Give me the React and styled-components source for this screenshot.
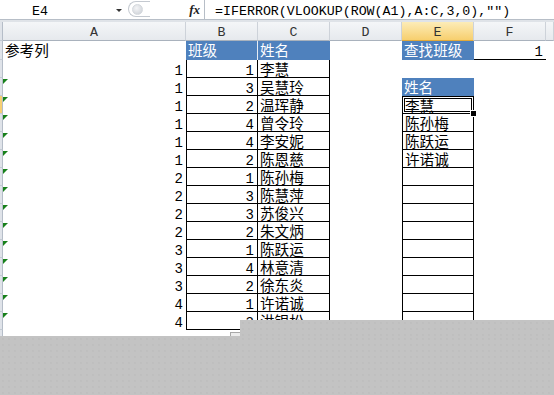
import React from 'react';
import styled, { createGlobalStyle, css } from 'styled-components';

const Global = createGlobalStyle`
  html, body { margin: 0; padding: 0; background: #fff; overflow: hidden; }
  body { width: 554px; height: 395px; font-family: "Liberation Mono", monospace; }
`;

const COLS = '3px 183px 72px 72px 72px 72px 72px 1fr';
const MONO = '"Liberation Mono", "DejaVu Sans Mono", monospace';
const CJK = '"Noto Sans CJK SC", "Noto Sans", sans-serif';

const Page = styled.div`
  position: relative;
  width: 554px;
  height: 395px;
  overflow: hidden;
  background: #fff;
`;

const FormulaBar = styled.div`
  display: flex;
  height: 19px;
  border-bottom: 1px solid #b7bec7;
  background: #fff;
`;

const NameBox = styled.div`
  width: 128px;
  box-sizing: border-box;
  display: flex;
  align-items: center;
  padding: 4px 0 0 32px;
  font: 13.3px ${MONO};
  color: #000;
`;

const DropArrow = styled.span`
  margin-left: auto;
  margin-right: 6px;
  margin-top: -3px;
  width: 0;
  height: 0;
  border-left: 3px solid transparent;
  border-right: 3px solid transparent;
  border-top: 3px solid #333;
`;

const Splitter = styled.div`
  width: 22px;
  height: 16px;
  margin-top: 1px;
  box-sizing: border-box;
  border: 1px solid #c4c9d0;
  border-right: none;
  border-radius: 9px 0 0 9px;
  display: flex;
  align-items: center;
  padding-left: 3px;
`;

const Knob = styled.span`
  width: 9px;
  height: 9px;
  border-radius: 50%;
  background: radial-gradient(circle at 40% 35%, #f4f5f7, #c9cdd3);
  border: 1px solid #d4d8dd;
`;

const FxBox = styled.div`
  width: 54px;
  display: flex;
  align-items: center;
  justify-content: flex-end;
  padding: 1px 4px 0 0;
  box-sizing: border-box;
  font: italic bold 13px "Liberation Serif", serif;
  color: #222;
`;

const FormulaInput = styled.div`
  flex: 1;
  border-left: 1px solid #b7bec7;
  display: flex;
  align-items: center;
  padding: 4px 0 0 10px;
  font: 13.3px ${MONO};
  color: #000;
  white-space: nowrap;
`;

const Band = styled.div`
  height: 2px;
  background: #dfe3e8;
`;

const HeaderRow = styled.div`
  display: grid;
  grid-template-columns: ${COLS};
  height: 19px;
`;

const HeaderCell = styled.div`
  box-sizing: border-box;
  border-bottom: 1px solid #a9b2bd;
  border-right: 1px solid #cdd2d9;
  background: ${(p) =>
    p.$active
      ? 'linear-gradient(#fcecb8, #f7cf6e)'
      : 'linear-gradient(#f4f6f8, #e6e9ed)'};
  ${(p) => p.$active && css`border-bottom-color: #e2a93a;`}
  display: flex;
  justify-content: center;
  align-items: center;
  padding-top: 3px;
  font: 13.3px ${MONO};
  color: #333;
`;

const Sheet = styled.div`
  display: grid;
  grid-template-columns: ${COLS};
  grid-template-rows: 19px repeat(17, 18px);
`;

const RowStub = styled.div`
  box-sizing: border-box;
  background: ${(p) => (p.$active ? '#f6cf72' : '#dfe3e9')};
  border-bottom: 1px solid #c3cad3;
  border-right: 1px solid #b5bdc8;
`;

const line = '1px solid #000';

const Cell = styled.div`
  position: relative;
  box-sizing: border-box;
  min-width: 0;
  background: ${(p) => (p.$fill ? '#4f81bd' : 'transparent')};
  color: ${(p) => (p.$fill ? '#fff' : '#000')};
  border-left: ${(p) => (p.$bl ? line : 'none')};
  border-right: ${(p) => (p.$br ? line : p.$sep ? '1px solid #e6ecf4' : 'none')};
  border-top: ${(p) => (p.$bt ? line : 'none')};
  border-bottom: ${(p) => (p.$bb ? line : 'none')};
  ${(p) =>
    p.$flag &&
    css`
      &::before {
        content: '';
        position: absolute;
        left: 0;
        top: 1px;
        width: 0;
        height: 0;
        border-top: 5px solid #17801a;
        border-right: 5px solid transparent;
      }
    `}
  ${(p) =>
    p.$selected &&
    css`
      box-shadow: inset 0 0 0 1px #fff, inset 0 0 0 2px #000;
    `}
`;

const Text = styled.span`
  display: block;
  white-space: nowrap;
  text-align: ${(p) => (p.$right ? 'right' : 'left')};
  padding: ${(p) => (p.$num ? '5px' : '0')} ${(p) => (p.$right ? '3px' : '0')} 0
    ${(p) => (p.$right ? '0' : '2px')};
  font: ${(p) => (p.$num ? `14px/13px ${MONO}` : `14.6px/17px ${CJK}`)};
`;

const FillHandle = styled.span`
  position: absolute;
  right: -4px;
  bottom: -4px;
  width: 5px;
  height: 5px;
  background: #000;
  border: 1px solid #fff;
  z-index: 2;
`;

const Shade = styled.div`
  position: absolute;
  background-color: #c3c3c3;
  background-image: radial-gradient(#b9b9b9 0.6px, transparent 0.8px);
  background-size: 6px 6px;
  z-index: 5;
`;

const ShadeLow = styled(Shade)`
  left: 0;
  right: 0;
  top: 336px;
  bottom: 0;
`;

const ShadeStep = styled(Shade)`
  left: 240px;
  right: 0;
  top: 320px;
  height: 16px;
`;

const Tab = styled.div`
  position: absolute;
  left: 230px;
  top: 332px;
  width: 10px;
  height: 4px;
  box-sizing: border-box;
  background: #ececec;
  border-top: 1px solid #a8a8a8;
  border-left: 1px solid #a8a8a8;
  z-index: 5;
`;

const aVals = ['1', '1', '1', '1', '1', '1', '2', '2', '2', '2', '3', '3', '3', '4', '4'];
const bVals = ['1', '3', '2', '4', '4', '2', '1', '3', '3', '2', '1', '4', '2', '1', '3'];
const cVals = [
  '李慧', '吴慧玲', '温珲静', '曾令玲', '李安妮', '陈恩慈', '陈孙梅', '陈慧萍',
  '苏俊兴', '朱文炳', '陈跃运', '林意清', '徐东炎', '许诺诚', '洪银松',
];
const eVals = ['李慧', '陈孙梅', '陈跃运', '许诺诚'];

function buildRow(r) {
  const cells = [];
  // A
  if (r === 1) cells.push({ text: '参考列' });
  else if (r <= 16) cells.push({ text: aVals[r - 2], num: true, right: true, flag: r >= 3 });
  else cells.push({});
  // B
  if (r === 1) cells.push({ text: '班级', fill: true, sep: true });
  else if (r <= 16) cells.push({ text: bVals[r - 2], num: true, right: true, bl: true, br: true, bb: true });
  else cells.push({});
  // C
  if (r === 1) cells.push({ text: '姓名', fill: true });
  else if (r <= 16) cells.push({ text: cVals[r - 2], br: true, bb: true });
  else cells.push({});
  // D
  cells.push({});
  // E
  if (r === 1) cells.push({ text: '查找班级', fill: true });
  else if (r === 3) cells.push({ text: '姓名', fill: true });
  else if (r >= 4)
    cells.push({
      text: eVals[r - 4] || '',
      bl: true,
      br: true,
      bb: true,
      bt: r === 4,
      selected: r === 4,
    });
  else cells.push({});
  // F
  if (r === 1) cells.push({ text: '1', num: true, right: true, bb: true });
  else cells.push({});
  // G
  cells.push({});
  return cells;
}

const headers = ['A', 'B', 'C', 'D', 'E', 'F', ''];

export default function App() {
  const rows = Array.from({ length: 17 }, (_, i) => i + 1);
  return (
    <Page>
      <Global />
      <FormulaBar>
        <NameBox>
          E4
          <DropArrow />
        </NameBox>
        <Splitter>
          <Knob />
        </Splitter>
        <FxBox>fx</FxBox>
        <FormulaInput>=IFERROR(VLOOKUP(ROW(A1),A:C,3,0),"")</FormulaInput>
      </FormulaBar>
      <Band />
      <HeaderRow>
        <RowStub />
        {headers.map((h, i) => (
          <HeaderCell key={i} $active={h === 'E'}>
            {h}
          </HeaderCell>
        ))}
      </HeaderRow>
      <Sheet>
        {rows.map((r) => (
          <React.Fragment key={r}>
            <RowStub $active={r === 4} />
            {buildRow(r).map((c, ci) => (
              <Cell
                key={ci}
                $fill={c.fill}
                $sep={c.sep}
                $bl={c.bl}
                $br={c.br}
                $bt={c.bt}
                $bb={c.bb}
                $flag={c.flag}
                $selected={c.selected}
              >
                {c.text ? (
                  <Text $num={c.num} $right={c.right}>
                    {c.text}
                  </Text>
                ) : null}
                {c.selected && <FillHandle />}
              </Cell>
            ))}
          </React.Fragment>
        ))}
      </Sheet>
      <ShadeStep />
      <ShadeLow />
      <Tab />
    </Page>
  );
}
